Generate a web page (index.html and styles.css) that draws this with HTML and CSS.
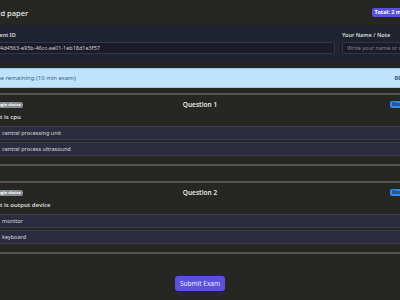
FILE: index.html
```html
<!DOCTYPE html>
<html>
<head>
    <title>Exam</title>
    <link rel="stylesheet" href="styles.css">
</head>
<body>
    <div class="page">
        <!-- Header -->
        <div class="top-bar">
            <h1>Shared paper</h1>
            <span class="badge total">Total: 2 marks</span>
        </div>

        <!-- Student info -->
        <div class="meta">
            <label for="student-id">Student ID</label>
            <label for="student-note">Your Name / Note</label>
            <input type="text" id="student-id" value="1f4d4563-e95b-46cc-ae01-1eb18d1e3f57" readonly>
            <input type="text" id="student-note" placeholder="Write your name or note">
        </div>

        <!-- Timer -->
        <div class="timer">
            <span>Time remaining (10 min exam)</span>
            <span class="clock" id="clock">09:59</span>
        </div>

        <!-- Question 1 -->
        <div class="card">
            <div class="card-head">
                <span class="badge type">Single choice</span>
                <h2>Question 1</h2>
                <span class="badge marks">Marks: 1</span>
            </div>
            <p class="prompt">What is cpu</p>
            <label class="option"><input type="radio" name="q1"> central processing unit</label>
            <label class="option"><input type="radio" name="q1"> central process ultrasound</label>
        </div>

        <!-- Question 2 -->
        <div class="card">
            <div class="card-head">
                <span class="badge type">Single choice</span>
                <h2>Question 2</h2>
                <span class="badge marks">Marks: 1</span>
            </div>
            <p class="prompt">What is output device</p>
            <label class="option"><input type="radio" name="q2"> monitor</label>
            <label class="option"><input type="radio" name="q2"> keyboard</label>
        </div>

        <div class="actions">
            <button>Submit Exam</button>
        </div>
    </div>
</body>
</html>
```

FILE: styles.css
```css
body {
    margin: 0;
    background-color: #262622;
    font-family: "Noto Sans", Arial, sans-serif;
    color: #e4e4e4;
    overflow: hidden;
    display: flex;
    justify-content: center;
}

.page {
    width: 440px;
    flex-shrink: 0;
}

.top-bar {
    height: 25px;
    display: flex;
    align-items: center;
    justify-content: space-between;
    padding-right: 4px;
}

.top-bar h1 {
    margin: 0;
    font-size: 7.5px;
    font-weight: 500;
    color: #ececec;
}

.badge {
    display: inline-block;
    font-weight: 700;
    border-radius: 2px;
    line-height: 1;
}

.badge.total {
    background-color: #5b4fe0;
    color: #fff;
    font-size: 5.5px;
    padding: 1.5px 3px;
}

.meta {
    background-color: #1f2330;
    padding: 6px 10px 8px 7px;
    display: grid;
    grid-template-columns: 1fr 68px;
    column-gap: 7px;
    row-gap: 3px;
}

.meta label {
    font-size: 5.5px;
    font-weight: 600;
    color: #dcdcdc;
    line-height: 8px;
}

.meta input {
    height: 12px;
    box-sizing: border-box;
    background-color: #1b1b29;
    border: 1px solid #33364a;
    border-radius: 2px;
    color: #cfcfcf;
    font-family: inherit;
    font-size: 5.5px;
    padding: 0 4px 0 7px;
    outline: none;
}

.meta input::placeholder {
    color: #80838e;
}

#student-note {
    padding-left: 4px;
}

.timer {
    margin: 6px 7px 0;
    height: 20px;
    box-sizing: border-box;
    background-color: #bfe3fb;
    border: 1px solid #94c9ee;
    border-radius: 2px;
    padding: 0 2px;
    display: flex;
    align-items: center;
    justify-content: space-between;
    font-size: 6px;
    color: #3d5f82;
}

.clock {
    font-weight: 700;
    color: #2a4a72;
}

.card {
    margin: 5px 7px 0;
    border-top: 2px solid #555553;
    border-bottom: 2px solid #555553;
    padding: 5px 0 8px;
}

.card + .card {
    margin-top: 15px;
}

.card-head {
    display: grid;
    grid-template-columns: 1fr auto 1fr;
    align-items: center;
    height: 8px;
}

.card-head h2 {
    margin: 0;
    font-size: 6.5px;
    font-weight: 600;
    color: #e6e6e6;
}

.badge.type {
    justify-self: start;
    background-color: #878b94;
    color: #fff;
    font-size: 4px;
    padding: 1px 2px;
    margin-left: 6px;
}

.badge.marks {
    justify-self: end;
    background-color: #2f8cf0;
    color: #15345e;
    font-size: 4.5px;
    padding: 1.5px 2px;
}

.prompt {
    margin: 5px 0 5px;
    font-size: 6px;
    font-weight: 600;
    line-height: 8px;
    color: #dedede;
}

.option {
    display: flex;
    align-items: center;
    gap: 3px;
    height: 14px;
    box-sizing: border-box;
    background-color: #2c2c40;
    border: 1px solid #3c3c4e;
    border-radius: 2px;
    padding: 0 5px;
    font-size: 5.5px;
    color: #dadada;
}

.option + .option {
    margin-top: 2px;
}

.option input {
    margin: 0;
    width: 6px;
    height: 6px;
}

.actions {
    text-align: center;
    margin-top: 15px;
}

button {
    background-color: #5b50e0;
    color: #ecebff;
    font-family: inherit;
    font-size: 6.5px;
    width: 50px;
    height: 15px;
    padding: 0;
    white-space: nowrap;
    border: none;
    border-radius: 3px;
    cursor: pointer;
}

button:hover {
    background-color: #4e43d2;
}
```
